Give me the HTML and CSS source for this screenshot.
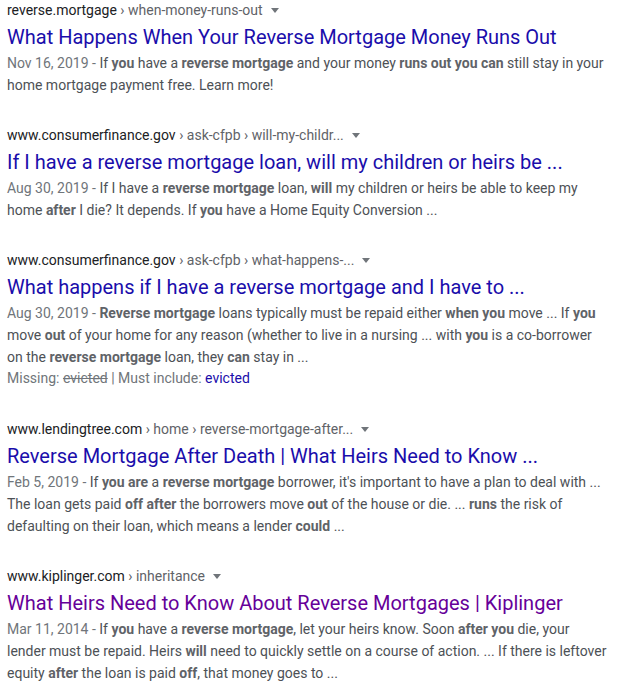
FILE: index.html
```html
<!DOCTYPE html>
<html>
<head>
<meta charset="utf-8">
<link rel="stylesheet" href="styles.css">
</head>
<body>
<div class="results">
  <div class="result">
    <div class="url"><span class="domain">reverse.mortgage</span><span class="crumb"> › when-money-runs-out</span><span class="arrow"></span></div>
    <div class="title">What Happens When Your Reverse Mortgage Money Runs Out</div>
    <div class="snippet"><span class="date">Nov 16, 2019 - </span>If <b>you</b> have a <b>reverse mortgage</b> and your money <b>runs out you can</b> still stay in your home mortgage payment free. Learn more!</div>
  </div>
  <div class="result">
    <div class="url"><span class="domain">www.consumerfinance.gov</span><span class="crumb"> › ask-cfpb › will-my-childr...</span><span class="arrow"></span></div>
    <div class="title">If I have a reverse mortgage loan, will my children or heirs be ...</div>
    <div class="snippet"><span class="date">Aug 30, 2019 - </span>If I have a <b>reverse mortgage</b> loan, <b>will</b> my children or heirs be able to keep my home <b>after</b> I die? It depends. If <b>you</b> have a Home Equity Conversion ...</div>
  </div>
  <div class="result">
    <div class="url"><span class="domain">www.consumerfinance.gov</span><span class="crumb"> › ask-cfpb › what-happens-...</span><span class="arrow"></span></div>
    <div class="title">What happens if I have a reverse mortgage and I have to ...</div>
    <div class="snippet"><span class="date">Aug 30, 2019 - </span><b>Reverse mortgage</b> loans typically must be repaid either <b>when you</b> move ... If <b>you</b> move <b>out</b> of your home for any reason (whether to live in a nursing ... with <b>you</b> is a co-borrower on the <b>reverse mortgage</b> loan, they <b>can</b> stay in ...</div>
    <div class="missing">Missing: <s>evicted</s> | Must include: <span class="mlink">evicted</span></div>
  </div>
  <div class="result">
    <div class="url"><span class="domain">www.lendingtree.com</span><span class="crumb"> › home › reverse-mortgage-after...</span><span class="arrow"></span></div>
    <div class="title">Reverse Mortgage After Death | What Heirs Need to Know ...</div>
    <div class="snippet"><span class="date">Feb 5, 2019 - </span>If <b>you are</b> a <b>reverse mortgage</b> borrower, it's important to have a plan to deal with ... The loan gets paid <b>off after</b> the borrowers move <b>out</b> of the house or die. ... <b>runs</b> the risk of defaulting on their loan, which means a lender <b>could</b> ...</div>
  </div>
  <div class="result">
    <div class="url"><span class="domain">www.kiplinger.com</span><span class="crumb"> › inheritance</span><span class="arrow"></span></div>
    <div class="title visited">What Heirs Need to Know About Reverse Mortgages | Kiplinger</div>
    <div class="snippet"><span class="date">Mar 11, 2014 - </span>If <b>you</b> have a <b>reverse mortgage</b>, let your heirs know. Soon <b>after you</b> die, your lender must be repaid. Heirs <b>will</b> need to quickly settle on a course of action. ... If there is leftover equity <b>after</b> the loan is paid <b>off</b>, that money goes to ...</div>
  </div>
</div>
</body>
</html>
```

FILE: styles.css
```css
html, body {
  margin: 0;
  padding: 0;
  background: #ffffff;
}

body {
  font-family: Roboto, "Liberation Sans", Arial, sans-serif;
}

.results {
  display: flex;
  flex-direction: column;
  gap: 29px;
  padding: 0 0 0 7px;
  width: 604px;
}

.result {
  display: flex;
  flex-direction: column;
}

.url {
  font-size: 14px;
  line-height: 20px;
  height: 20px;
  white-space: nowrap;
  display: flex;
  align-items: center;
}

.domain {
  color: #202124;
}

.crumb {
  color: #5f6368;
  white-space: pre;
}

.arrow {
  display: inline-block;
  width: 0;
  height: 0;
  border-left: 4px solid transparent;
  border-right: 4px solid transparent;
  border-top: 5px solid #70757a;
  margin-left: 8px;
  margin-top: 1px;
}

.title {
  font-size: 20px;
  line-height: 26px;
  color: #1a0dab;
  margin-top: 4px;
  white-space: nowrap;
}

.title.visited {
  color: #660099;
}

.snippet {
  font-size: 14px;
  line-height: 22px;
  color: #4d5156;
  margin-top: 2px;
}

.snippet b {
  font-weight: 700;
  color: #5f6368;
}

.date {
  color: #70757a;
}

.missing {
  font-size: 14px;
  line-height: 22px;
  color: #70757a;
  margin-top: -1px;
  margin-bottom: 1px;
}

.mlink {
  color: #1a0dab;
}
```
